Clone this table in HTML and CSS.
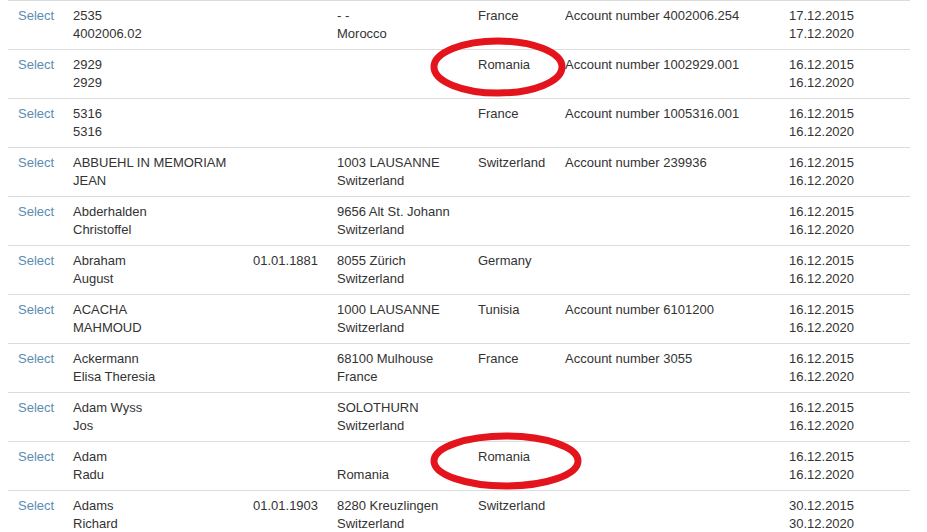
FILE: index.html
```html
<!DOCTYPE html>
<html>
<head>
<meta charset="utf-8">
<link rel="stylesheet" href="styles.css">
</head>
<body>
<div class="wrap">
<table class="results">
<colgroup>
<col class="c1"><col class="c2"><col class="c3"><col class="c4"><col class="c5"><col class="c6"><col class="c7">
</colgroup>
<tbody>
<tr><td><a href="#">Select</a></td><td>2535<br>4002006.02</td><td></td><td>- -<br>Morocco</td><td>France</td><td>Account number 4002006.254</td><td>17.12.2015<br>17.12.2020</td></tr>
<tr><td><a href="#">Select</a></td><td>2929<br>2929</td><td></td><td></td><td>Romania</td><td>Account number 1002929.001</td><td>16.12.2015<br>16.12.2020</td></tr>
<tr><td><a href="#">Select</a></td><td>5316<br>5316</td><td></td><td></td><td>France</td><td>Account number 1005316.001</td><td>16.12.2015<br>16.12.2020</td></tr>
<tr><td><a href="#">Select</a></td><td>ABBUEHL IN MEMORIAM<br>JEAN</td><td></td><td>1003 LAUSANNE<br>Switzerland</td><td>Switzerland</td><td>Account number 239936</td><td>16.12.2015<br>16.12.2020</td></tr>
<tr><td><a href="#">Select</a></td><td>Abderhalden<br>Christoffel</td><td></td><td>9656 Alt St. Johann<br>Switzerland</td><td></td><td></td><td>16.12.2015<br>16.12.2020</td></tr>
<tr><td><a href="#">Select</a></td><td>Abraham<br>August</td><td>01.01.1881</td><td>8055 Zürich<br>Switzerland</td><td>Germany</td><td></td><td>16.12.2015<br>16.12.2020</td></tr>
<tr><td><a href="#">Select</a></td><td>ACACHA<br>MAHMOUD</td><td></td><td>1000 LAUSANNE<br>Switzerland</td><td>Tunisia</td><td>Account number 6101200</td><td>16.12.2015<br>16.12.2020</td></tr>
<tr><td><a href="#">Select</a></td><td>Ackermann<br>Elisa Theresia</td><td></td><td>68100 Mulhouse<br>France</td><td>France</td><td>Account number 3055</td><td>16.12.2015<br>16.12.2020</td></tr>
<tr><td><a href="#">Select</a></td><td>Adam Wyss<br>Jos</td><td></td><td>SOLOTHURN<br>Switzerland</td><td></td><td></td><td>16.12.2015<br>16.12.2020</td></tr>
<tr><td><a href="#">Select</a></td><td>Adam<br>Radu</td><td></td><td>&nbsp;<br>Romania</td><td>Romania</td><td></td><td>16.12.2015<br>16.12.2020</td></tr>
<tr><td><a href="#">Select</a></td><td>Adams<br>Richard</td><td>01.01.1903</td><td>8280 Kreuzlingen<br>Switzerland</td><td>Switzerland</td><td></td><td>30.12.2015<br>30.12.2020</td></tr>
</tbody>
</table>
<svg class="marks" width="927" height="532" viewBox="0 0 927 532">
<ellipse cx="498" cy="67" rx="64" ry="26" fill="none" stroke="#e3141c" stroke-width="7"/>
<ellipse cx="506" cy="461" rx="72" ry="25" fill="none" stroke="#e3141c" stroke-width="7"/>
</svg>
</div>
</body>
</html>
```
FILE: styles.css
```css
html, body {
  margin: 0;
  padding: 0;
  background: #fff;
  overflow: hidden;
}
.wrap {
  position: relative;
  width: 927px;
  height: 532px;
  overflow: hidden;
}
.results {
  margin-left: 8px;
  width: 902px;
  table-layout: fixed;
  border-collapse: collapse;
  font-family: "Liberation Sans", Arial, sans-serif;
  font-size: 13px;
  line-height: 18px;
  color: #333;
}
.c1 { width: 55px; }
.c2 { width: 180px; }
.c3 { width: 84px; }
.c4 { width: 141px; }
.c5 { width: 87px; }
.c6 { width: 224px; }
.c7 { width: 131px; }
.results td {
  border-top: 1px solid #dcdcdc;
  padding: 6px 0 6px 10px;
  vertical-align: top;
  white-space: nowrap;
  height: 36px;
}
.results a {
  color: #5a8db2;
  text-decoration: none;
}
.marks {
  position: absolute;
  left: 0;
  top: 0;
  pointer-events: none;
}
```
